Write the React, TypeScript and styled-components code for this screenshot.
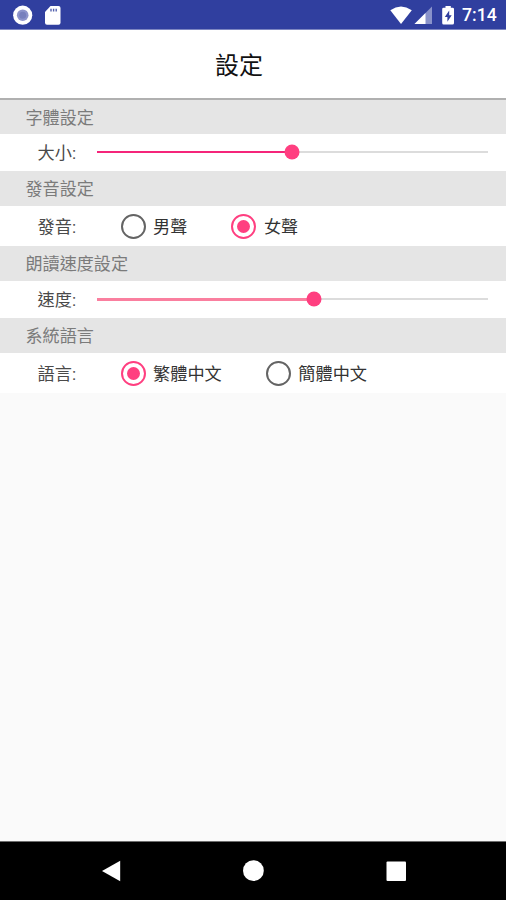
import React, { useState } from "react";
import styled, { createGlobalStyle } from "styled-components";

const PINK = "#ff3f80";

const GlobalStyle = createGlobalStyle`
  * { box-sizing: border-box; }
  body {
    margin: 0;
    background: #fafafa;
    font-family: Roboto, "Noto Sans CJK TC", sans-serif;
  }
`;

const Screen = styled.div`
  display: flex;
  flex-direction: column;
  width: 506px;
  height: 900px;
  overflow: hidden;
  background: #fafafa;
`;

const StatusBar = styled.header`
  display: flex;
  justify-content: space-between;
  flex: none;
  height: 30px;
  background: #303f9f;
  border-bottom: 1px solid #7d86c1;
`;

const StatusIcons = styled.svg`
  display: block;
  height: 29px;
`;

const StatusGroup = styled.div`
  display: flex;
`;

const Clock = styled.time`
  width: 44px;
  color: #fff;
  font-size: 17.6px;
  font-weight: 500;
  line-height: 31px;
  white-space: nowrap;
`;

const TitleBar = styled.div`
  display: flex;
  align-items: center;
  justify-content: center;
  flex: none;
  height: 70px;
  padding: 4px 28px 0 0;
  background: #fff;
  border-bottom: 2px solid #b0b0b0;
`;

const Title = styled.h1`
  margin: 0;
  color: #111;
  font-size: 24px;
  font-weight: 400;
  line-height: 36px;
`;

const Settings = styled.main`
  flex: 1;
`;

const SectionTitle = styled.h2<{ $height: number }>`
  height: ${(p) => p.$height}px;
  margin: 0;
  padding: 1px 0 0 25.5px;
  background: #e5e5e5;
  color: #7b7b7b;
  font-size: 17.1px;
  font-weight: 400;
  line-height: ${(p) => p.$height}px;
`;

const Row = styled.div<{ $height: number }>`
  display: flex;
  align-items: center;
  height: ${(p) => p.$height}px;
  padding-left: 37.5px;
  background: #fff;
`;

const Label = styled.span`
  flex: none;
  width: 59px;
  padding-top: 1px;
  color: #4a4a4a;
  font-size: 17.2px;
  line-height: 24px;
`;

const Track = styled.div`
  position: relative;
  width: 391px;
  height: 2px;
  margin-bottom: 1px;
  background: #dcdcdc;
`;

const Fill = styled.div<{ $soft?: boolean }>`
  height: ${(p) => (p.$soft ? 3 : 2)}px;
  background: ${(p) => (p.$soft ? "#fa7f9f" : "#f5257a")};
`;

const Thumb = styled.div`
  position: absolute;
  top: 50%;
  width: 15px;
  height: 15px;
  border-radius: 50%;
  background: ${PINK};
  transform: translate(-50%, -50%);
`;

const Choices = styled.div`
  display: flex;
  gap: 44px;
  padding-left: 24px;
`;

const Choice = styled.button`
  display: flex;
  align-items: center;
  gap: 7.5px;
  padding: 0;
  border: 0;
  background: none;
  color: #333;
  font: inherit;
  font-size: 17.2px;
  line-height: 24px;
`;

const ChoiceName = styled.span`
  padding-top: 1px;
`;

const Ring = styled.span<{ $on: boolean }>`
  display: grid;
  place-items: center;
  width: 25px;
  height: 25px;
  border: 2px solid ${(p) => (p.$on ? PINK : "#646464")};
  border-radius: 50%;

  &::after {
    content: "";
    width: 13px;
    height: 13px;
    border-radius: 50%;
    background: ${(p) => (p.$on ? PINK : "transparent")};
  }
`;

const NavBar = styled.nav`
  flex: none;
  height: 59px;
  background: #000;
  border-top: 1px solid #6e6e6e;
`;

const NavIcons = styled.svg`
  display: block;
`;

function Slider({ value, soft }: { value: number; soft?: boolean }) {
  return (
    <Track>
      <Fill $soft={soft} style={{ width: `${value}%` }} />
      <Thumb style={{ left: `${value}%` }} />
    </Track>
  );
}

function RadioGroup({ options, initial }: { options: string[]; initial: number }) {
  const [selected, setSelected] = useState(initial);
  return (
    <Choices role="radiogroup">
      {options.map((name, i) => (
        <Choice key={name} role="radio" aria-checked={i === selected} onClick={() => setSelected(i)}>
          <Ring $on={i === selected} />
          <ChoiceName>{name}</ChoiceName>
        </Choice>
      ))}
    </Choices>
  );
}

export default function App() {
  return (
    <>
      <GlobalStyle />
      <Screen>
        <StatusBar>
          <StatusIcons width="70" height="29" viewBox="0 0 70 29">
            <circle cx="22.7" cy="15.2" r="9.6" fill="#fff" />
            <circle cx="22.7" cy="15.2" r="5.8" fill="#8d94cb" />
            <circle cx="22.7" cy="15.2" r="3.5" fill="#7780bd" />
            <path d="M50.5 6H58.5Q60.5 6 60.5 8V22.7Q60.5 24.7 58.5 24.7H47Q45 24.7 45 22.7V12Z" fill="#fff" />
            <path d="M50.3 8.7h1.4v2.8h-1.4zM52.9 8.7h1.4v2.8h-1.4zM55.5 8.7h1.4v2.8h-1.4z" fill="#5360ad" />
          </StatusIcons>
          <StatusGroup>
            <StatusIcons width="74" height="29" viewBox="388 0 74 29">
              <path d="M390.3 10.2Q401 2.8 411.8 10.2L401 24Z" fill="#fff" />
              <path d="M432 6.5V24H414.5Z" fill="#8992ca" />
              <path d="M425.5 13V24H414.5Z" fill="#fff" />
              <path d="M445.5 6V7.7H443.6Q442.2 7.7 442.2 9.1V23Q442.2 24.5 443.6 24.5H452.5Q454 24.5 454 23V9.1Q454 7.7 452.5 7.7H450.8V6Z" fill="#fff" />
              <path d="M449.2 10.5L444.8 17H447.4V21.8L451.7 15.2H449.2Z" fill="#303f9f" />
            </StatusIcons>
            <Clock>7:14</Clock>
          </StatusGroup>
        </StatusBar>
        <TitleBar>
          <Title>設定</Title>
        </TitleBar>
        <Settings>
          <SectionTitle $height={34}>字體設定</SectionTitle>
          <Row $height={37}>
            <Label>大小:</Label>
            <Slider value={50} />
          </Row>
          <SectionTitle $height={35}>發音設定</SectionTitle>
          <Row $height={40}>
            <Label>發音:</Label>
            <RadioGroup options={["男聲", "女聲"]} initial={1} />
          </Row>
          <SectionTitle $height={35}>朗讀速度設定</SectionTitle>
          <Row $height={37}>
            <Label>速度:</Label>
            <Slider value={55.5} soft />
          </Row>
          <SectionTitle $height={35}>系統語言</SectionTitle>
          <Row $height={40}>
            <Label>語言:</Label>
            <RadioGroup options={["繁體中文", "簡體中文"]} initial={0} />
          </Row>
        </Settings>
        <NavBar>
          <NavIcons width="506" height="58" viewBox="0 842 506 58">
            <path d="M102 871L120.2 860.8V881.3Z" fill="#fff" />
            <circle cx="253.4" cy="870.7" r="10.4" fill="#fff" />
            <rect x="386.5" y="861.5" width="19.5" height="19.5" rx="1" fill="#fff" />
          </NavIcons>
        </NavBar>
      </Screen>
    </>
  );
}
